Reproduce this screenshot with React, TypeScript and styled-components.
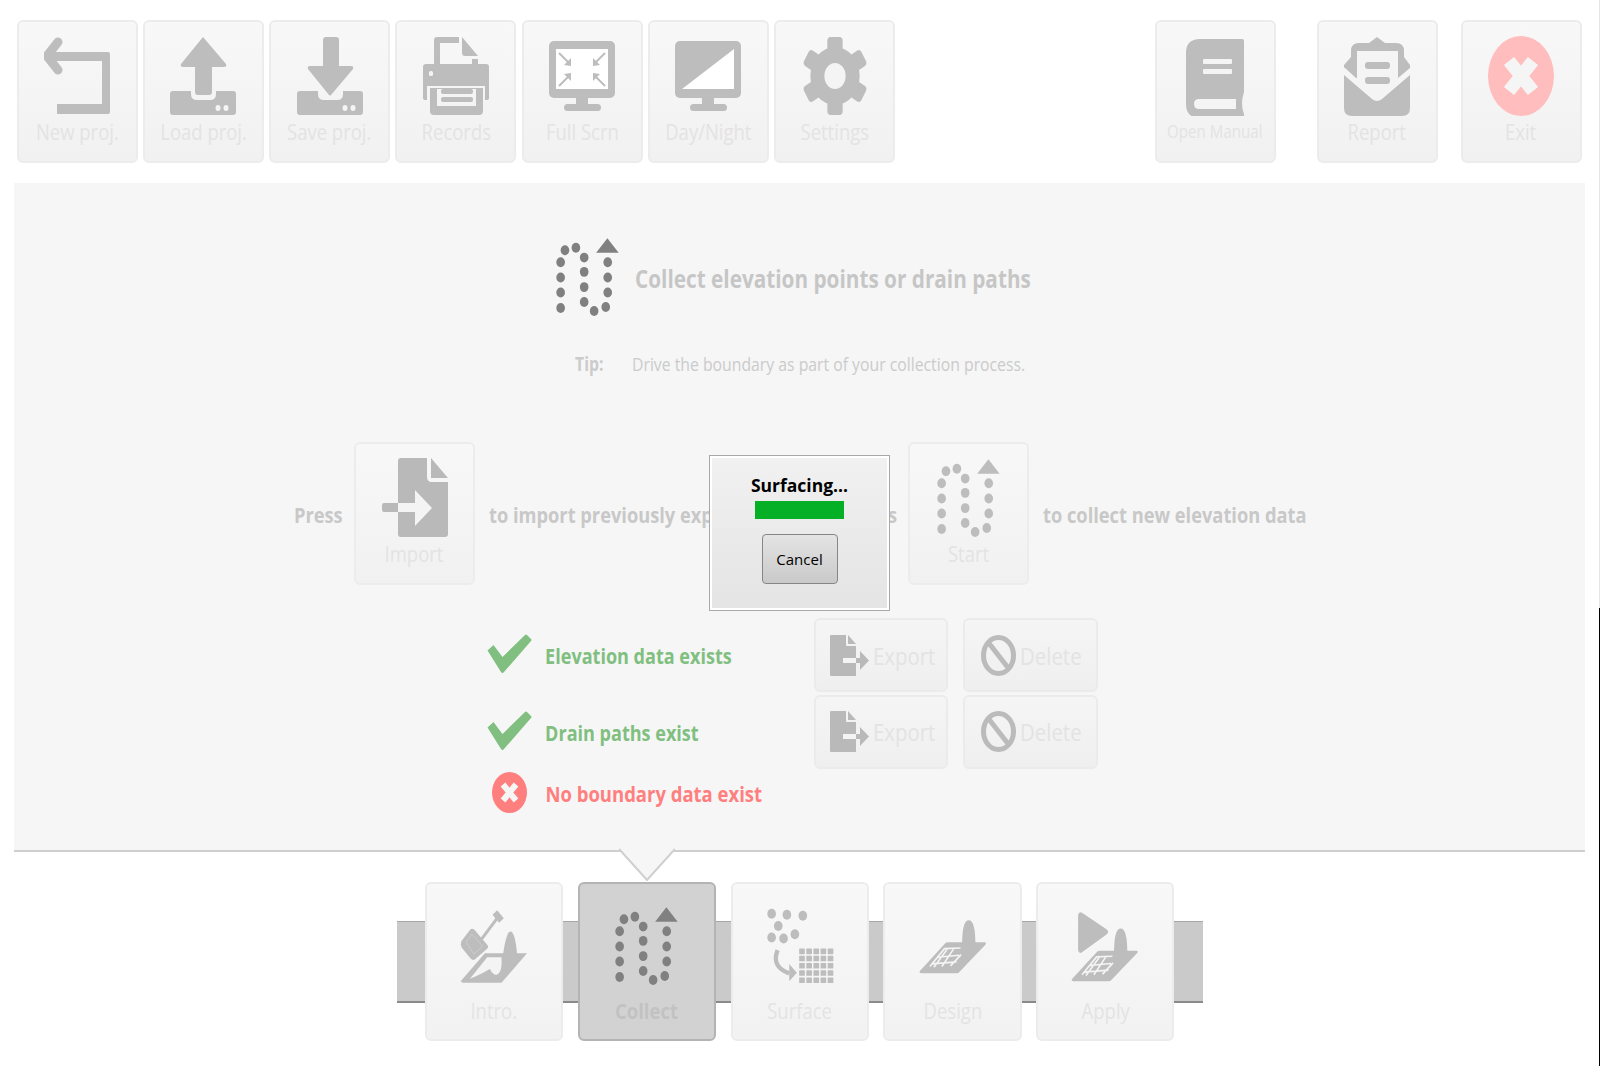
import React from "react";
import styled, { createGlobalStyle } from "styled-components";

const GRAY = "#bdbdbd";
const CUT = "#f4f4f4";
const DARK = "#808080";
const FONT = `"Open Sans", "Liberation Sans", sans-serif`;
// the reference type is a narrow humanist face, none installed has that width
const NARROW = "scaleX(0.83)";

const GlobalStyle = createGlobalStyle`
  html, body {
    margin: 0;
    background: #fff;
    overflow: hidden;
  }
  body {
    font-family: ${FONT};
  }
`;

const Page = styled.div`
  position: relative;
  width: 1600px;
  height: 1066px;
  padding-top: 20px;
  box-sizing: border-box;
`;

const ScreenEdge = styled.div<{ $dark?: boolean }>`
  position: absolute;
  right: 0;
  width: 1px;
  top: ${(p) => (p.$dark ? "608px" : "0")};
  height: ${(p) => (p.$dark ? "458px" : "608px")};
  background: ${(p) => (p.$dark ? "#000" : "#e4e4e4")};
`;

const Toolbar = styled.div`
  display: flex;
  padding: 0 18.5px 0 16.5px;
`;

const ToolGroup = styled.div`
  display: flex;
  gap: 5.3px;
`;

const RightGroup = styled.div`
  display: flex;
  margin-left: auto;
`;

const ToolButton = styled.button<{ $gap?: number }>`
  width: 121px;
  height: 143px;
  padding: 14px 0 0;
  margin-left: ${(p) => p.$gap ?? 0}px;
  box-sizing: border-box;
  display: flex;
  flex-direction: column;
  align-items: center;
  flex-shrink: 0;
  font-family: inherit;
  background: linear-gradient(#f8f8f8, #f1f1f1);
  border: 2px solid #ececec;
  border-radius: 6px;
`;

const Label = styled.span<{ $small?: boolean }>`
  display: block;
  font-size: ${(p) => (p.$small ? 18 : 22)}px;
  font-weight: 400;
  line-height: 30px;
  color: #e3e3e3;
  white-space: nowrap;
  transform: scaleX(0.84);
`;

const ActionLabel = styled(Label)`
  margin-top: 1px;
  font-size: 24px;
  transform: scaleX(0.85);
  transform-origin: left center;
`;

const Panel = styled.main`
  position: relative;
  height: 669px;
  margin: 20px 15px 0 14px;
  padding-top: 55px;
  box-sizing: border-box;
  background: #f6f6f6;
  border-bottom: 2px solid #cfcfcf;
`;

const Pointer = styled.svg`
  position: absolute;
  left: 605px;
  top: 100%;
  margin-top: -2px;
  display: block;
`;

const HeadingRow = styled.div`
  display: flex;
  align-items: center;
  gap: 16px;
  padding-left: 542px;
  height: 78px;
`;

const Heading = styled.h1`
  margin: 0 0 -2px;
  font-size: 25px;
  font-weight: 700;
  color: #c6c6c6;
  white-space: nowrap;
  transform: ${NARROW};
  transform-origin: left center;
`;

const TipRow = styled.div`
  display: flex;
  align-items: center;
  height: 24px;
  margin-top: 36px;
  padding-left: 561px;
  font-size: 19px;
  color: #cbcbcb;
`;

const TipLabel = styled.b`
  width: 57px;
  font-weight: 700;
  transform: ${NARROW};
  transform-origin: left center;
`;

const TipText = styled.span`
  white-space: nowrap;
  transform: ${NARROW};
  transform-origin: left center;
`;

const PressRow = styled.div`
  display: flex;
  align-items: center;
  gap: 14px;
  margin-top: 66px;
  padding-left: 280px;
`;

const PressText = styled.span<{ $width?: number }>`
  font-size: 22px;
  font-weight: 700;
  color: #c8c8c8;
  white-space: nowrap;
  width: ${(p) => (p.$width ? `${p.$width}px` : "auto")};
  flex-shrink: 0;
  transform: ${NARROW};
  transform-origin: left center;
`;

const StatusGrid = styled.div`
  display: grid;
  grid-template-columns: 45px 282px 134px 135px;
  grid-template-rows: 74px 73px 44px;
  row-gap: 3px;
  margin-top: 33px;
  padding-left: 473px;
  align-items: center;
`;

const StatusIcon = styled.div`
  display: flex;
  justify-content: center;
  margin-top: -2px;
`;

const StatusText = styled.span<{ $bad?: boolean }>`
  padding-left: 16px;
  font-size: 22px;
  font-weight: 700;
  color: ${(p) => (p.$bad ? "#ff7f7f" : "#80bf80")};
  white-space: nowrap;
  transform: scaleX(${(p) => (p.$bad ? 0.84 : 0.82)});
  transform-origin: left center;
`;

const ActionButton = styled.button<{ $pad: number }>`
  height: 74px;
  box-sizing: border-box;
  display: flex;
  align-items: center;
  gap: 4px;
  padding: 0 0 0 ${(p) => p.$pad}px;
  font-family: inherit;
  background: linear-gradient(#f5f5f5, #efefef);
  border: 2px solid #ebebeb;
  border-radius: 6px;
`;

const DeleteButton = styled(ActionButton)`
  margin-left: 15px;
  width: 135px;
`;

const Dialog = styled.div`
  position: absolute;
  left: 696px;
  top: 273px;
  width: 179px;
  height: 154px;
  box-sizing: border-box;
  display: flex;
  flex-direction: column;
  align-items: center;
  padding-top: 16px;
  background: linear-gradient(#f1f1f1, #e4e4e4);
  border: 2px solid #fff;
  outline: 1px solid #a9a9a9;
`;

const DialogTitle = styled.div`
  font-size: 17.5px;
  font-weight: 700;
  line-height: 22px;
  color: #000;
  white-space: nowrap;
`;

const Progress = styled.div`
  width: 89px;
  height: 18px;
  margin-top: 5px;
  background: #05b027;
`;

const CancelButton = styled.button`
  width: 76px;
  height: 50px;
  margin-top: 15px;
  font-family: inherit;
  font-size: 15px;
  color: #000;
  background: linear-gradient(#e4e4e4, #c9c9c9);
  border: 1px solid #868686;
  border-radius: 4px;
`;

const Footer = styled.nav`
  position: relative;
  display: flex;
  gap: 14.5px;
  width: 749.5px;
  margin: 30px 0 0 425px;
  &::before {
    content: "";
    position: absolute;
    left: -28px;
    right: -28px;
    top: 39px;
    height: 82px;
    box-sizing: border-box;
    background: #cacaca;
    border-top: 1px solid #a8a8a8;
    border-bottom: 2px solid #8a8a8a;
  }
`;

const Tab = styled.button<{ $active?: boolean }>`
  position: relative;
  width: 138.3px;
  height: 159px;
  box-sizing: border-box;
  padding: 22px 0 0;
  display: flex;
  flex-direction: column;
  align-items: center;
  font-family: inherit;
  background: ${(p) =>
    p.$active ? "#d2d2d2" : "linear-gradient(#f8f8f8, #f2f2f2)"};
  border: 2px solid ${(p) => (p.$active ? "#b4b4b4" : "#ececec")};
  border-radius: 6px;
`;

const TabIconBox = styled.div`
  height: 80px;
  display: flex;
  align-items: center;
  justify-content: center;
`;

const TabLabel = styled.span<{ $active?: boolean }>`
  margin-top: 9px;
  font-size: 22px;
  line-height: 30px;
  font-weight: ${(p) => (p.$active ? 700 : 400)};
  color: ${(p) => (p.$active ? "#c2c2c2" : "#e3e3e3")};
  transform: scaleX(0.84);
`;

const Icon = styled.svg`
  display: block;
  flex-shrink: 0;
`;

const BaseIcon = ({ children }: { children: React.ReactNode }) => (
  <Icon width={66} height={80} viewBox="0 0 66 80">
    {children}
  </Icon>
);

const NewProjIcon = () => (
  <BaseIcon>
    <path d="M9 16H64Q66 16 66 18V76Q66 78 64 78H13V68H58V25H9Z" fill={GRAY} />
    <path
      d="M14 6L3 20L14 34"
      fill="none"
      stroke={GRAY}
      strokeWidth={9}
      strokeLinecap="round"
      strokeLinejoin="round"
    />
  </BaseIcon>
);

const Tray = () => (
  <>
    <path
      d="M3 55H21V58Q21 64 27 64H40Q46 64 46 58V55H63Q66 55 66 58V76Q66 79 63 79H3Q0 79 0 76V58Q0 55 3 55Z"
      fill={GRAY}
    />
    <ellipse cx={48} cy={72} rx={2.5} ry={3} fill={CUT} />
    <ellipse cx={56} cy={72} rx={2.5} ry={3} fill={CUT} />
  </>
);

const LoadIcon = () => (
  <BaseIcon>
    <path
      d="M33 1L56 28Q57 31 54 31H42V56Q42 59 39 59H28Q25 59 25 56V31H13Q10 31 11 28Z"
      fill={GRAY}
    />
    <Tray />
  </BaseIcon>
);

const SaveIcon = () => (
  <BaseIcon>
    <path
      d="M29 1H39Q42 1 42 4V30H54Q57 30 56 33L34 59Q33 60 32 59L11 33Q10 30 13 30H26V4Q26 1 29 1Z"
      fill={GRAY}
    />
    <Tray />
  </BaseIcon>
);

const RecordsIcon = () => (
  <BaseIcon>
    <path d="M11 29V4Q11 1 14 1H36V7H17V29Z" fill={GRAY} />
    <path d="M39 1L55 20H42Q39 20 39 17Z" fill={GRAY} />
    <rect x={49} y={23} width={6} height={6} fill={GRAY} />
    <path
      d="M3 28H63Q66 28 66 31V62Q66 64 64 64H62V50H4V64H2Q0 64 0 62V31Q0 28 3 28Z"
      fill={GRAY}
    />
    <rect x={6} y={35} width={4} height={5} rx={1.5} fill={CUT} />
    <path
      d="M7 52H60V75Q60 79 56 79H11Q7 79 7 75ZM14 53V70H53V53Z"
      fill={GRAY}
      fillRule="evenodd"
    />
    <rect x={18} y={53} width={32} height={5} rx={2} fill={GRAY} />
    <rect x={18} y={61} width={32} height={5} rx={2} fill={GRAY} />
  </BaseIcon>
);

const Monitor = ({ children }: { children: React.ReactNode }) => (
  <BaseIcon>
    <rect x={0} y={5} width={66} height={57} rx={5} fill={GRAY} />
    <rect x={27} y={60} width={12} height={10} fill={GRAY} />
    <rect x={15} y={68} width={37} height={7} rx={3.5} fill={GRAY} />
    {children}
  </BaseIcon>
);

const FullScreenIcon = () => (
  <Monitor>
    <rect x={7} y={13} width={52} height={40} fill="#fff" />
    <g stroke={GRAY} strokeWidth={2} fill={GRAY}>
      <path d="M10 17L21 28" />
      <path d="M56 17L45 28" />
      <path d="M10 50L21 39" />
      <path d="M56 50L45 39" />
    </g>
    <g fill={GRAY}>
      <path d="M22 30L22 22L15 29Z" />
      <path d="M44 30L44 22L51 29Z" />
      <path d="M22 37L22 45L15 38Z" />
      <path d="M44 37L44 45L51 38Z" />
    </g>
  </Monitor>
);

const DayNightIcon = () => (
  <Monitor>
    <path d="M7 53L59 13V53Z" fill="#fff" />
  </Monitor>
);

const SettingsIcon = () => (
  <BaseIcon>
    <g transform="translate(33 40) scale(0.85 1)">
      <circle r={29} fill={GRAY} />
      {[0, 60, 120, 180, 240, 300].map((a) => (
        <rect
          key={a}
          x={-9}
          y={-39}
          width={18}
          height={18}
          rx={4}
          fill={GRAY}
          transform={`rotate(${a})`}
        />
      ))}
      <ellipse rx={12.5} ry={13} fill={CUT} />
    </g>
  </BaseIcon>
);

const ManualIcon = () => (
  <BaseIcon>
    <path
      d="M18 3H60Q62 3 62 5V56Q58 68 62 78V80Q62 82 60 82H18Q4 82 4 68V17Q4 3 18 3Z"
      fill={GRAY}
    />
    <rect x={21} y={23} width={29} height={5} rx={1} fill={CUT} />
    <rect x={21} y={33} width={29} height={5} rx={1} fill={CUT} />
    <path d="M17 63H54V73H17Q12 73 12 68Q12 63 17 63Z" fill={CUT} />
  </BaseIcon>
);

const ReportIcon = () => (
  <BaseIcon>
    <path
      d="M33 1L41 7H52Q60 7 60 15V21L66 29Q67 31 66 32L54 42H12L1 32Q-1 31 0 29L7 21V15Q7 7 15 7H25Z"
      fill={GRAY}
    />
    <path d="M13 15H54V50L33 65L13 50Z" fill={CUT} />
    <rect x={21} y={26} width={25} height={7} rx={3} fill={GRAY} />
    <rect x={21} y={41} width={25} height={7} rx={3} fill={GRAY} />
    <path
      d="M0 39L28 63Q33 67 38 63L66 39V72Q66 80 58 80H8Q0 80 0 72Z"
      fill={GRAY}
    />
  </BaseIcon>
);

const CrossIcon = ({ rx, ry, fill, cut, stroke, arm }: { rx: number; ry: number; fill: string; cut: string; stroke: number; arm: [number, number] }) => (
  <Icon width={rx * 2} height={ry * 2} viewBox={`${-rx} ${-ry} ${rx * 2} ${ry * 2}`}>
    <ellipse rx={rx} ry={ry} fill={fill} />
    <path
      d={`M${-arm[0]} ${-arm[1]}L${arm[0]} ${arm[1]}M${arm[0]} ${-arm[1]}L${-arm[0]} ${arm[1]}`}
      stroke={cut}
      strokeWidth={stroke}
    />
  </Icon>
);

const ImportIcon = () => (
  <BaseIcon>
    <path
      d="M19 0H45V19Q45 24 50 24H66V76Q66 79 63 79H19Q16 79 16 76V3Q16 0 19 0Z"
      fill="#b9b9b9"
    />
    <path d="M49 0L66 20H49Z" fill="#b9b9b9" />
    <rect x={0} y={45} width={18} height={9} rx={2} fill="#b9b9b9" />
    <path d="M16 45H33V32L50 50L33 68V54H16Z" fill={CUT} />
  </BaseIcon>
);

const CollectIcon = ({ color }: { color: string }) => {
  const dots = [
    [103, 90], [136, 82], [161, 112], [232, 126], [90, 126], [90, 172],
    [90, 217], [90, 264], [161, 155], [161, 201], [161, 246], [191, 273],
    [226, 261], [232, 172], [232, 217],
  ];
  return (
    <Icon width={63} height={80} viewBox="76 50 190 241">
      {dots.map(([x, y]) => (
        <ellipse key={`${x}-${y}`} cx={x} cy={y} rx={13} ry={15} fill={color} />
      ))}
      <path d="M231 54L265 97H197Z" fill={color} />
    </Icon>
  );
};

const ExportIcon = () => (
  <Icon width={39} height={41} viewBox="0 0 39 41">
    <path d="M1 0H16V10Q16 11 17 11H26V41H1Q0 41 0 40V1Q0 0 1 0Z" fill="#b9b9b9" />
    <path d="M18 0L26 9H18Z" fill="#b9b9b9" />
    <rect x={13} y={23} width={13} height={5} fill={CUT} />
    <path d="M26 23H30V16L39 25.5L30 35V28H26Z" fill="#b9b9b9" />
  </Icon>
);

const DeleteIcon = () => (
  <Icon width={35} height={41} viewBox="0 0 35 41">
    <ellipse cx={17.5} cy={20.5} rx={15} ry={18} fill="none" stroke="#bbb" strokeWidth={5} />
    <path d="M7 7L28 34" stroke="#bbb" strokeWidth={5} />
  </Icon>
);

const CheckIcon = () => (
  <Icon width={45} height={40} viewBox="0 0 45 40">
    <path
      d="M0.5 16.5L6.5 11L15.5 23L38 1Q39 0 40 1L44 5Q45 6 44 7L17 38Q15.5 40 14 38Z"
      fill="#80bf80"
    />
  </Icon>
);

const IntroIcon = () => (
  <Icon width={68} height={75} viewBox="210 205 205 225">
    <path d="M214 302L240 268Q246 260 254 268L292 312Q298 320 290 326L258 354Q250 362 242 354L216 322Q210 312 214 302Z" fill={GRAY} />
    <path d="M228 304L246 280L278 316L252 340Z" fill="none" stroke="#d4d4d4" strokeWidth={2} />
    <path d="M270 302L325 228" stroke={GRAY} strokeWidth={9} />
    <path d="M308 222L322 208L342 232L328 246Z" fill={GRAY} />
    <path d="M212 422L285 338H412L335 427H218Z" fill={GRAY} />
    <path d="M340 340Q350 272 362 272Q376 272 382 340Q380 400 338 400Z" fill={GRAY} />
    <path d="M240 415L292 350H335Q338 395 322 402Q310 405 300 385Q285 395 240 415Z" fill={CUT} />
  </Icon>
);

const Plate = () => (
  <g>
    <path d="M597 332L675 247Q678 245 682 245H793Q799 246 795 252L716 335Q714 338 710 338H601Q595 337 597 332Z" fill={GRAY} />
    <path d="M725 250Q725 178 745 178Q765 178 765 250Z" fill={GRAY} />
    <path
      d="M628 318L672 264L720 262M640 320L680 266M664 318L700 264M690 316L722 282M650 290L716 284M634 310L708 304"
      fill="none"
      stroke={CUT}
      strokeWidth={5}
    />
  </g>
);

const SurfaceIcon = () => {
  const dots = [[152, 160], [198, 163], [246, 166], [172, 197], [222, 222], [188, 235], [152, 232]];
  const cells = [0, 1, 2, 3, 4];
  return (
    <Icon width={68} height={77} viewBox="135 143 205 232">
      {dots.map(([x, y]) => (
        <ellipse key={x} cx={x} cy={y} rx={13} ry={15} fill={GRAY} />
      ))}
      {cells.map((r) =>
        cells.map((c) => (
          <rect key={`${r}${c}`} x={235 + c * 21.5} y={265 + r * 21.8} width={17} height={17} rx={2} fill={GRAY} />
        ))
      )}
      <path d="M170 270Q150 320 205 340" fill="none" stroke={GRAY} strokeWidth={13} />
      <path d="M205 312L228 338L205 364Z" fill={GRAY} />
    </Icon>
  );
};

const DesignIcon = () => (
  <Icon width={68} height={55} viewBox="595 175 205 165">
    <Plate />
  </Icon>
);

const ApplyIcon = () => (
  <Icon width={68} height={71} viewBox="1053 150 205 215">
    <path d="M1074 163Q1076 150 1087 156L1160 205Q1170 213 1160 221L1087 274Q1076 282 1074 268Z" fill={GRAY} />
    <g transform="translate(458 25)">
      <Plate />
    </g>
  </Icon>
);

const tools = [
  { label: "New proj.", icon: <NewProjIcon /> },
  { label: "Load proj.", icon: <LoadIcon /> },
  { label: "Save proj.", icon: <SaveIcon /> },
  { label: "Records", icon: <RecordsIcon /> },
  { label: "Full Scrn", icon: <FullScreenIcon /> },
  { label: "Day/Night", icon: <DayNightIcon /> },
  { label: "Settings", icon: <SettingsIcon /> },
];

const tabs = [
  { label: "Intro.", icon: <IntroIcon /> },
  { label: "Collect", icon: <CollectIcon color={DARK} />, active: true },
  { label: "Surface", icon: <SurfaceIcon /> },
  { label: "Design", icon: <DesignIcon /> },
  { label: "Apply", icon: <ApplyIcon /> },
];

const StatusActions = () => (
  <>
    <ActionButton $pad={14}>
      <ExportIcon />
      <ActionLabel>Export</ActionLabel>
    </ActionButton>
    <DeleteButton $pad={16}>
      <DeleteIcon />
      <ActionLabel>Delete</ActionLabel>
    </DeleteButton>
  </>
);

const App = () => {
  return (
    <Page>
      <GlobalStyle />
      <ScreenEdge />
      <ScreenEdge $dark />
      <Toolbar>
        <ToolGroup>
          {tools.map((tool) => (
            <ToolButton key={tool.label}>
              {tool.icon}
              <Label>{tool.label}</Label>
            </ToolButton>
          ))}
        </ToolGroup>
        <RightGroup>
          <ToolButton>
            <ManualIcon />
            <Label $small>Open Manual</Label>
          </ToolButton>
          <ToolButton $gap={41}>
            <ReportIcon />
            <Label>Report</Label>
          </ToolButton>
          <ToolButton $gap={23}>
            <CrossIcon rx={33} ry={40} fill="#ffbdbd" cut="#f5f5f5" stroke={13} arm={[12, 15]} />
            <Label>Exit</Label>
          </ToolButton>
        </RightGroup>
      </Toolbar>

      <Panel>
        <HeadingRow>
          <CollectIcon color={DARK} />
          <Heading>Collect elevation points or drain paths</Heading>
        </HeadingRow>
        <TipRow>
          <TipLabel>Tip:</TipLabel>
          <TipText>Drive the boundary as part of your collection process.</TipText>
        </TipRow>
        <PressRow>
          <PressText $width={46}>Press</PressText>
          <ToolButton>
            <ImportIcon />
            <Label>Import</Label>
          </ToolButton>
          <PressText $width={405}>to import previously exported paths or press</PressText>
          <ToolButton>
            <CollectIcon color={GRAY} />
            <Label>Start</Label>
          </ToolButton>
          <PressText>to collect new elevation data</PressText>
        </PressRow>
        <StatusGrid>
          <StatusIcon>
            <CheckIcon />
          </StatusIcon>
          <StatusText>Elevation data exists</StatusText>
          <StatusActions />
          <StatusIcon>
            <CheckIcon />
          </StatusIcon>
          <StatusText>Drain paths exist</StatusText>
          <StatusActions />
          <StatusIcon>
            <CrossIcon rx={17.5} ry={20.5} fill="#ff7f7f" cut="#f6f6f6" stroke={6} arm={[6.5, 8]} />
          </StatusIcon>
          <StatusText $bad>No boundary data exist</StatusText>
        </StatusGrid>
        <Dialog>
          <DialogTitle>Surfacing...</DialogTitle>
          <Progress />
          <CancelButton>Cancel</CancelButton>
        </Dialog>
        <Pointer width={56} height={33} viewBox="0 0 56 33">
          <path d="M0 1L28 32L56 1" fill="#f6f6f6" stroke="#cfcfcf" strokeWidth={2} />
        </Pointer>
      </Panel>

      <Footer>
        {tabs.map((tab) => (
          <Tab key={tab.label} $active={tab.active}>
            <TabIconBox>{tab.icon}</TabIconBox>
            <TabLabel $active={tab.active}>{tab.label}</TabLabel>
          </Tab>
        ))}
      </Footer>
    </Page>
  );
};

export default App;
